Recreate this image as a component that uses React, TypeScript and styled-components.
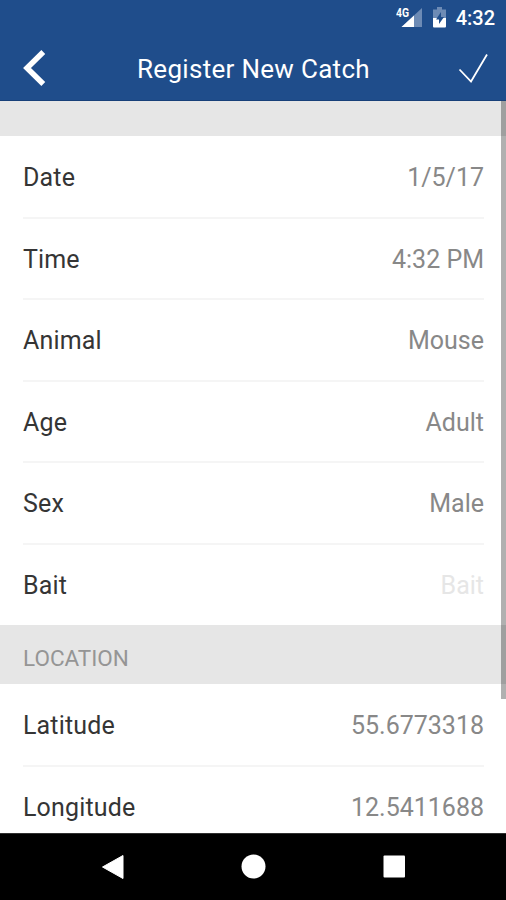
import React from "react";
import styled, { createGlobalStyle } from "styled-components";

const GlobalStyle = createGlobalStyle`
  * { box-sizing: border-box; }
  body { margin: 0; background: #fff; font-family: Roboto, sans-serif; }
`;

const Screen = styled.div`
  width: 506px;
  height: 900px;
  display: flex;
  flex-direction: column;
  overflow: hidden;
  background: #fff;
`;

const Header = styled.header`
  flex: none;
  height: 101px;
  background: #1f4d8b;
  border-bottom: 1px solid #174079;
  color: #fff;
`;

const StatusBar = styled.div`
  height: 37px;
  padding-right: 11px;
  display: flex;
  align-items: center;
  justify-content: flex-end;
`;

const StatusIcons = styled.svg`
  display: block;
  width: 56px;
  height: 37px;
  margin-right: 4px;
`;

const Clock = styled.span`
  font-size: 20px;
  font-weight: 500;
  line-height: 37px;
`;

const TitleBar = styled.div`
  height: 63px;
  display: grid;
  grid-template-columns: 90px 1fr 90px;
  align-items: center;
`;

const Title = styled.h1`
  margin: 0;
  padding: 2px 0 0 1px;
  text-align: center;
  font-size: 26px;
  font-weight: 400;
  line-height: 61px;
  letter-spacing: 0.3px;
  white-space: nowrap;
`;

const BarButton = styled.button`
  width: 90px;
  height: 63px;
  padding: 0;
  border: 0;
  background: none;
  color: inherit;
  svg { display: block; }
`;

const Content = styled.main`
  position: relative;
  flex: 1;
  min-height: 0;
  overflow: hidden;
`;

const SectionHeader = styled.h2<{ $height: number }>`
  margin: 0;
  height: ${(p) => p.$height}px;
  padding: 5px 23px 0;
  background: #e6e6e6;
  color: #959595;
  font-size: 22.5px;
  font-weight: 400;
  line-height: 57px;
`;

const Row = styled.div`
  height: 81.5px;
  margin: 0 22px 0 23px;
  display: flex;
  justify-content: space-between;
  box-shadow: inset 0 -1px #f5f5f5, 0 1px #f5f5f5;
  font-size: 25px;
  line-height: 83.5px;
  &:last-child { box-shadow: none; }
`;

const Label = styled.span`
  color: #353535;
  letter-spacing: 0.15px;
`;

const Value = styled.span<{ $placeholder?: boolean }>`
  color: ${(p) => (p.$placeholder ? "#e6e6e6" : "#888")};
`;

const ScrollThumb = styled.div`
  position: absolute;
  top: 0;
  right: 0;
  width: 5px;
  height: 598px;
  background: rgba(0, 0, 0, 0.31);
`;

const NavBar = styled.nav`
  flex: none;
  height: 67px;
  border-top: 1px solid #303030;
  background: #000;
  svg { display: block; }
`;

type Field = { label: string; value: string; placeholder?: boolean };

const details: Field[] = [
  { label: "Date", value: "1/5/17" },
  { label: "Time", value: "4:32 PM" },
  { label: "Animal", value: "Mouse" },
  { label: "Age", value: "Adult" },
  { label: "Sex", value: "Male" },
  { label: "Bait", value: "Bait", placeholder: true },
];

const location: Field[] = [
  { label: "Latitude", value: "55.6773318" },
  { label: "Longitude", value: "12.5411688" },
];

const NetworkLabel = styled.text`
  font: 700 12.5px Roboto, sans-serif;
  fill: #fff;
`;

function FieldList({ fields }: { fields: Field[] }) {
  return (
    <div>
      {fields.map((f) => (
        <Row key={f.label}>
          <Label>{f.label}</Label>
          <Value $placeholder={f.placeholder}>{f.value}</Value>
        </Row>
      ))}
    </div>
  );
}

export default function App() {
  return (
    <Screen>
      <GlobalStyle />
      <Header>
        <StatusBar>
          <StatusIcons viewBox="0 0 56 37">
            <path d="M26 8v19H5.500z" fill="#6d8bb5" />
            <path d="M18 15.500v11.500H5.500z" fill="#fff" />
            <path d="M0 6h14v10.500H0z" fill="#1f4d8b" />
            <NetworkLabel x="0" y="16.500" textLength="13" lengthAdjust="spacingAndGlyphs">4G</NetworkLabel>
            <path d="M41 7h5v2.500h4V18H37V9.500h4z" fill="#6d8bb5" />
            <path d="M37 18h13v8.500q0 1-1 1H38q-1 0-1-1z" fill="#fff" />
            <path d="M45 12l-5 7.500h3V24l5-7h-3z" fill="#1f4d8b" />
          </StatusIcons>
          <Clock>4:32</Clock>
        </StatusBar>
        <TitleBar>
          <BarButton aria-label="Back">
            <svg width="90" height="63" viewBox="0 0 90 63">
              <path d="M43.300 15L27 31l16.300 16" fill="none" stroke="#fff" strokeWidth="5.500" />
            </svg>
          </BarButton>
          <Title>Register New Catch</Title>
          <BarButton aria-label="Save">
            <svg width="90" height="63" viewBox="0 0 90 63">
              <path d="M43.500 32.500L55 44.500L71 17.500" fill="none" stroke="#fff" strokeWidth="1.800" />
            </svg>
          </BarButton>
        </TitleBar>
      </Header>
      <Content>
        <SectionHeader $height={35} />
        <FieldList fields={details} />
        <SectionHeader $height={59}>LOCATION</SectionHeader>
        <FieldList fields={location} />
        <ScrollThumb />
      </Content>
      <NavBar>
        <svg width="506" height="66" viewBox="0 0 506 66">
          <path d="M102.500 33L123 21.500v23z" fill="#fff" stroke="#fff" strokeLinejoin="round" />
          <circle cx="253.500" cy="32.500" r="12" fill="#fff" />
          <rect x="383.500" y="21.500" width="21.500" height="22" rx="1" fill="#fff" />
        </svg>
      </NavBar>
    </Screen>
  );
}
